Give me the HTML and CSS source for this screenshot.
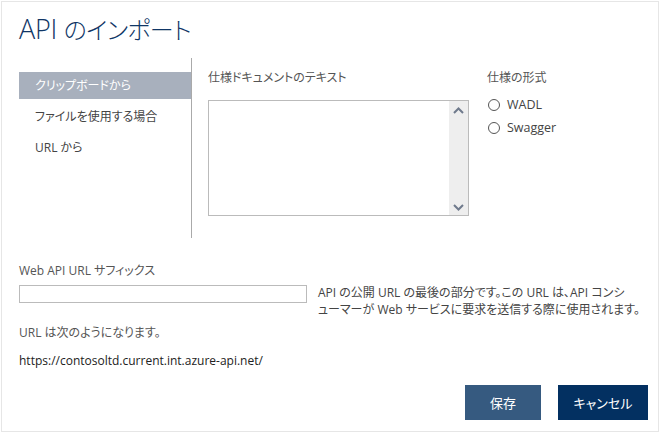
FILE: index.html
```html
<!DOCTYPE html>
<html lang="ja">
<head>
<meta charset="utf-8">
<title>API のインポート</title>
<link rel="stylesheet" href="styles.css">
</head>
<body>
<div class="frame">
  <h1 class="title">API <span class="title-jp">のインポート</span></h1>
  <div class="main">
    <nav class="nav">
      <div class="nav-item active">クリップボードから</div>
      <div class="nav-item">ファイルを使用する場合</div>
      <div class="nav-item">URL から</div>
    </nav>
    <div class="spec">
      <div class="label">仕様ドキュメントのテキスト</div>
      <div class="textarea">
        <div class="text-body"></div>
        <div class="scrollbar">
          <svg class="chev" width="11" height="7" viewBox="0 0 11 7"><path d="M1 6 L5.5 1.5 L10 6" fill="none" stroke="#6f7a8c" stroke-width="2"/></svg>
          <svg class="chev" width="11" height="7" viewBox="0 0 11 7"><path d="M1 1 L5.5 5.5 L10 1" fill="none" stroke="#6f7a8c" stroke-width="2"/></svg>
        </div>
      </div>
    </div>
    <div class="format">
      <div class="label">仕様の形式</div>
      <label class="radio"><span class="circle"></span>WADL</label>
      <label class="radio"><span class="circle"></span>Swagger</label>
    </div>
  </div>
  <div class="suffix">
    <div class="label">Web API URL サフィックス</div>
    <div class="suffix-row">
      <div class="input"></div>
      <p class="desc">API の公開 URL の最後の部分です。この URL は、API コンシ<br>ューマーが Web サービスに要求を送信する際に使用されます。</p>
    </div>
  </div>
  <div class="label result-label">URL は次のようになります。</div>
  <div class="result-url">https://contosoltd.current.int.azure-api.net/</div>
  <div class="actions">
    <button class="btn save">保存</button>
    <button class="btn cancel">キャンセル</button>
  </div>
</div>
</body>
</html>
```

FILE: styles.css
```css
html, body {
  margin: 0;
  padding: 0;
  background: #ffffff;
}
body {
  font-family: "Open Sans", "Noto Sans CJK JP", sans-serif;
  font-feature-settings: "palt";
  font-size: 12px;
  color: #555555;
}
.frame {
  box-sizing: border-box;
  margin: 1px 0 0 1px;
  width: 658px;
  height: 431px;
  border: 1px solid #e6e6e6;
  padding: 0 10px 0 17px;
  display: flex;
  flex-direction: column;
}
.title {
  margin: 9px 0 0 0;
  font-size: 27px;
  font-weight: 300;
  line-height: 36px;
  color: #0f3666;
  letter-spacing: -0.3px;
}
.title-jp {
  font-size: 24px;
  letter-spacing: -0.6px;
}
.main {
  display: flex;
  margin-top: 10px;
  height: 180px;
}
.nav {
  flex-shrink: 0;
  width: 172px;
  border-right: 1px solid #aaaaaa;
  padding-top: 14px;
  display: flex;
  flex-direction: column;
  gap: 4px;
}
.nav-item {
  height: 27px;
  line-height: 27px;
  padding-left: 16px;
  font-size: 12px;
  color: #444444;
}
.nav-item.active {
  background: #a8b0bd;
  color: #ffffff;
}
.label {
  font-size: 12px;
  line-height: 18px;
  color: #555555;
}
.spec {
  flex-shrink: 0;
  margin-left: 16px;
  width: 261px;
  padding-top: 11px;
}
.textarea {
  box-sizing: border-box;
  margin-top: 13px;
  height: 116px;
  border: 1px solid #bbbbbb;
  display: flex;
}
.text-body {
  flex: 1;
}
.scrollbar {
  width: 19px;
  background: #eeeeee;
  display: flex;
  flex-direction: column;
  justify-content: space-between;
  align-items: center;
  padding: 6px 0 4px;
}
.format {
  margin-left: 18px;
  padding-top: 11px;
  display: flex;
  flex-direction: column;
}
.format .label {
  margin-bottom: 6px;
}
.radio {
  display: flex;
  align-items: center;
  height: 23px;
  font-size: 12.5px;
  color: #444444;
}
.circle {
  box-sizing: border-box;
  width: 12px;
  height: 12px;
  border: 1px solid #555555;
  border-radius: 50%;
  margin: 0 7px 0 1px;
}
.suffix {
  margin-top: 24px;
}
.suffix-row {
  display: flex;
  align-items: flex-start;
  margin-top: 4px;
}
.input {
  flex-shrink: 0;
  box-sizing: border-box;
  width: 288px;
  height: 18px;
  margin-top: 1px;
  border: 1px solid #bbbbbb;
}
.desc {
  margin: 0 0 0 11px;
  font-size: 12px;
  line-height: 17px;
  color: #444444;
  white-space: nowrap;
}
.result-label {
  margin-top: 6px;
}
.result-url {
  margin-top: 10px;
  font-size: 12px;
  line-height: 18px;
  color: #222222;
}
.actions {
  margin-top: auto;
  margin-bottom: 11px;
  display: flex;
  justify-content: flex-end;
  gap: 17px;
}
.btn {
  border: none;
  height: 35px;
  color: #ffffff;
  font-family: inherit;
  font-feature-settings: "palt";
  font-size: 13px;
  padding: 0;
}
.save {
  width: 76px;
  background: #365a80;
}
.cancel {
  width: 90px;
  background: #033061;
}
```
